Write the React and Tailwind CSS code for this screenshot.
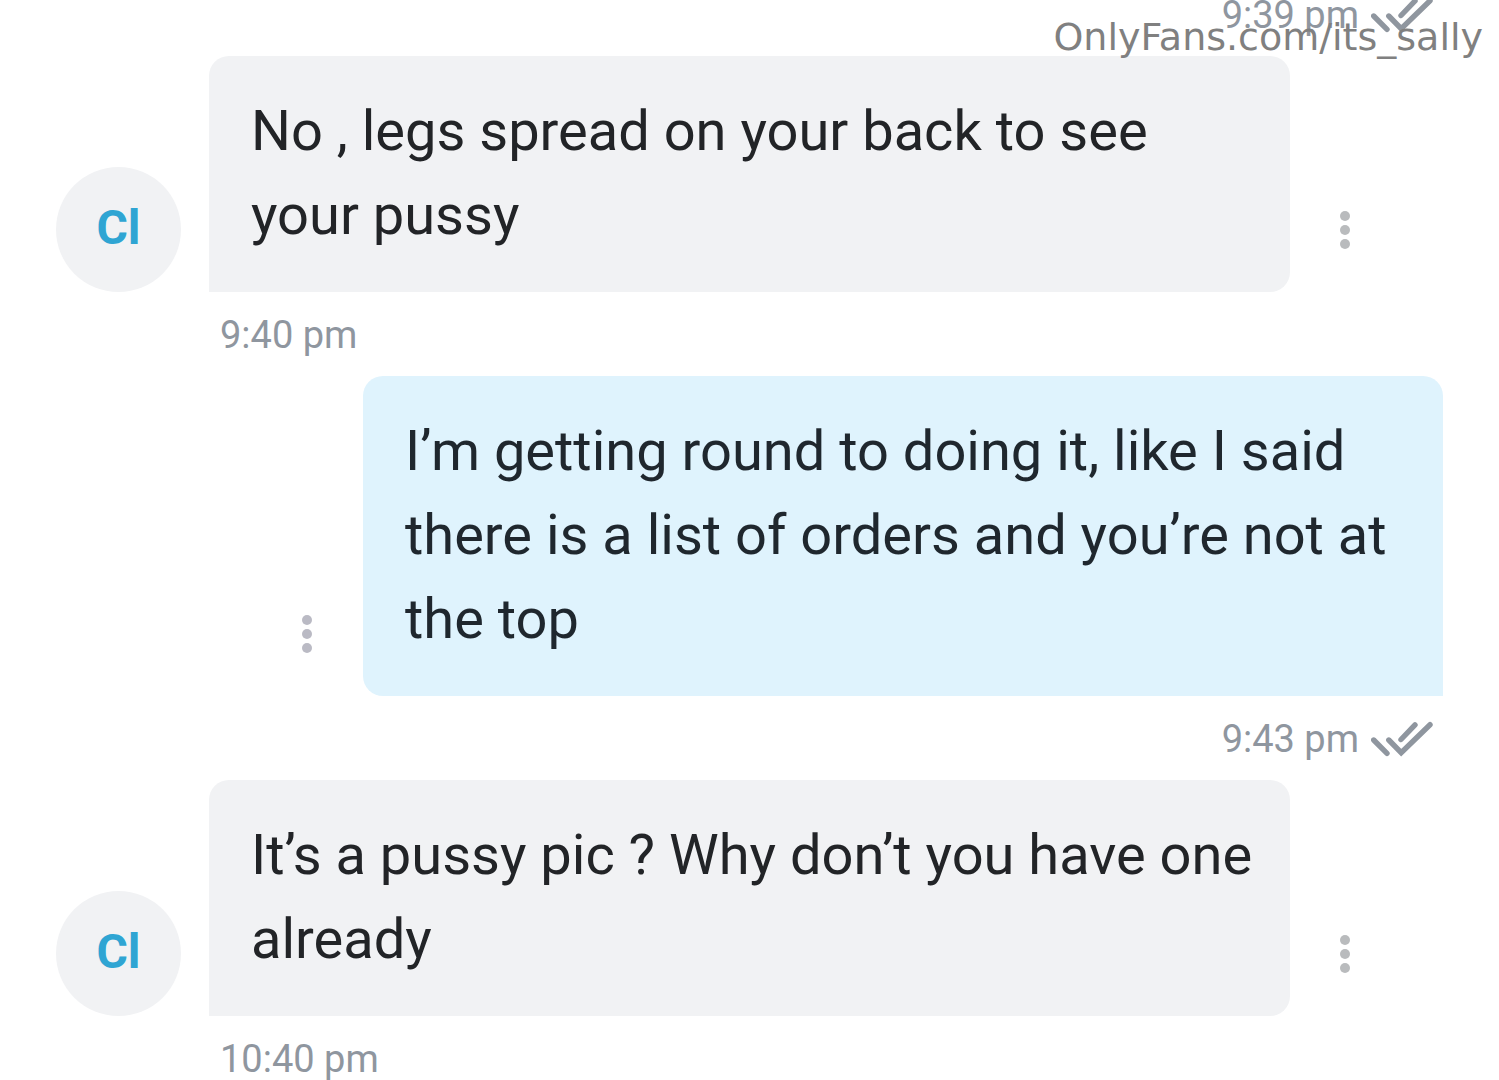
const messages = [
  { id: 1, from: 'them', text: 'No , legs spread on your back to see your pussy', time: '9:40 pm' },
  { id: 2, from: 'me', text: 'I’m getting round to doing it, like I said there is a list of orders and you’re not at the top', time: '9:43 pm' },
  { id: 3, from: 'them', text: 'It’s a pussy pic ? Why don’t you have one already', time: '10:40 pm' },
]

function ReadTicks() {
  return (
    <svg
      className="h-9 w-[62px] shrink-0"
      viewBox="0 0 62 36"
      fill="none"
      stroke="currentColor"
      strokeWidth="5.4"
      strokeLinecap="round"
      aria-hidden="true"
    >
      <path d="M2.7 19 16 32.3" />
      <path d="M17.8 19 30.2 31.6 59 3.7" strokeLinejoin="miter" />
      <path d="M30 18.5 44 3.9" />
    </svg>
  )
}

function Footer({ time, sent }) {
  if (sent) {
    return (
      <div className="flex h-21 items-center justify-end gap-3 pt-0.5 pr-[66px] text-[38px] text-[#8f969f]">
        <time>{time}</time>
        <ReadTicks />
      </div>
    )
  }
  return (
    <div className="flex h-21 items-center pt-0.5 pl-[220px] text-[38px] text-[#8f969f]">
      <time>{time}</time>
    </div>
  )
}

function MenuButton({ className }) {
  return (
    <button
      type="button"
      aria-label="Message options"
      className={`flex h-[125px] shrink-0 flex-col items-center justify-center gap-1 ${className}`}
    >
      <span className="size-2.5 rounded-full bg-current" />
      <span className="size-2.5 rounded-full bg-current" />
      <span className="size-2.5 rounded-full bg-current" />
    </button>
  )
}

function Received({ text }) {
  return (
    <div className="flex items-end pr-[99px] pl-14">
      <div className="mr-7 flex size-[125px] shrink-0 items-center justify-center rounded-full bg-[#f1f2f4] pb-1 text-5xl font-bold text-[#2fa5d3]">
        Cl
      </div>
      <p className="flex-1 rounded-[20px] rounded-bl-none bg-[#f1f2f4] pt-[33px] pr-8 pb-[35px] pl-[42px] text-[56px] leading-[84px] text-[#222427]">
        {text}
      </p>
      <MenuButton className="w-[110px] text-[#b9bbbd]" />
    </div>
  )
}

function Sent({ text }) {
  return (
    <div className="flex items-end pr-14 pl-[251px]">
      <MenuButton className="w-28 text-[#babac4]" />
      <p className="flex-1 rounded-[20px] rounded-br-none bg-[#dff3fd] pt-[33px] pr-8 pb-[35px] pl-[42px] text-[56px] leading-[84px] text-[#1f272e]">
        {text}
      </p>
    </div>
  )
}

export default function App() {
  return (
    <main className="relative h-screen overflow-hidden bg-white font-[Roboto,sans-serif]">
      <div className="-mt-7">
        <Footer time="9:39 pm" sent />
        {messages.map((m) => (
          <div key={m.id}>
            {m.from === 'me' ? <Sent text={m.text} /> : <Received text={m.text} />}
            <Footer time={m.time} sent={m.from === 'me'} />
          </div>
        ))}
      </div>
      <span className="absolute top-[15px] right-4 font-['DejaVu_Sans',sans-serif] text-[38px] leading-11 text-[#808080]">
        OnlyFans.com/its_sally
      </span>
    </main>
  )
}
